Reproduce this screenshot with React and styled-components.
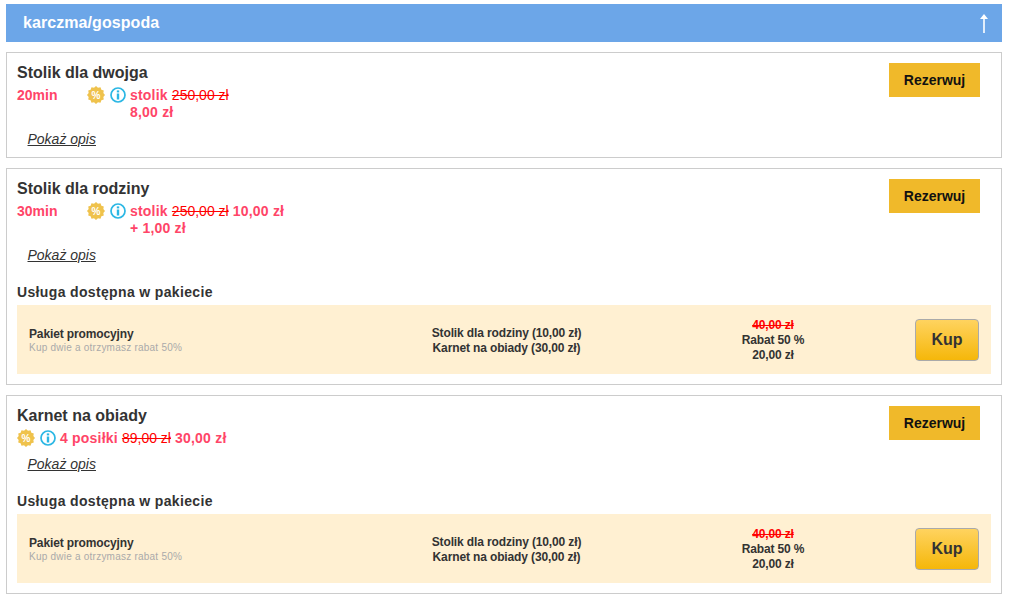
import React from "react";
import styled, { createGlobalStyle } from "styled-components";

const GlobalStyle = createGlobalStyle`
  html, body {
    margin: 0;
    padding: 0;
    background: #fff;
    font-family: "Liberation Sans", Arial, sans-serif;
    color: #333;
  }
`;

const Page = styled.div`
  width: 996px;
  padding: 4px 0 0 6px;
`;

const Header = styled.div`
  height: 38px;
  background: #6ca6e8;
  display: flex;
  align-items: center;
  justify-content: space-between;
  padding: 0 13px 0 17px;
  margin-bottom: 10px;
  color: #fff;
  font-size: 16px;
  font-weight: bold;
  letter-spacing: 0.07px;
`;

const Card = styled.div`
  border: 1px solid #ccc;
  margin-bottom: 10px;
  padding: 10px 10px 0;
`;

const Top = styled.div`
  display: flex;
  justify-content: space-between;
  align-items: flex-start;
`;

const Title = styled.div`
  font-size: 16px;
  font-weight: bold;
  line-height: 20px;
  color: #333;
`;

const PriceRow = styled.div`
  display: flex;
  align-items: flex-start;
  margin-top: 4px;
  font-size: 14px;
  font-weight: bold;
  line-height: 17px;
  letter-spacing: 0.2px;
  color: #ff4568;
`;

const Time = styled.div`
  width: 70px;
  letter-spacing: 0;
`;

const Icons = styled.div`
  display: flex;
  align-items: center;
  gap: 5px;
  height: 17px;
  margin: -1px 4px 0 0;
`;

const OldPrice = styled.span`
  color: #ff0000;
  font-weight: normal;
  letter-spacing: 0;
  text-decoration: line-through;
`;

const Reserve = styled.button`
  width: 91px;
  height: 34px;
  margin-right: 11px;
  border: none;
  padding: 0;
  background: #f0b92a;
  color: #111;
  font: bold 14px "Liberation Sans", Arial, sans-serif;
  cursor: pointer;
`;

const Describe = styled.a`
  display: inline-block;
  margin: ${(p) => (p.$tight ? 9 : 10)}px 0 9px 10.5px;
  font-size: 14px;
  line-height: 17px;
  font-style: italic;
  text-decoration: underline;
  color: #333;
`;

const PackageHeading = styled.div`
  margin-top: 11px;
  font-size: 14px;
  font-weight: bold;
  line-height: 17px;
  letter-spacing: 0.35px;
  color: #333;
`;

const Banner = styled.div`
  display: grid;
  grid-template-columns: 300px 355px 178px 1fr;
  align-items: center;
  box-sizing: border-box;
  height: 69px;
  margin: 4px 0 10px;
  padding: 2px 12px 0;
  background: #fff0d2;
  font-size: 12px;
  font-weight: bold;
  letter-spacing: -0.13px;
  color: #333;
`;

const PackageName = styled.div`
  line-height: 14px;
`;

const PackageNote = styled.div`
  font-size: 10px;
  line-height: 13px;
  font-weight: normal;
  letter-spacing: 0.23px;
  color: #aaa;
`;

const Centered = styled.div`
  text-align: center;
  line-height: 15px;
`;

const Struck = styled.div`
  color: #ff0000;
  text-decoration: line-through;
`;

const Buy = styled.button`
  justify-self: end;
  width: 64px;
  height: 42px;
  margin-top: -2px;
  padding: 0;
  border: 1px solid #aaa;
  border-radius: 4px;
  background: linear-gradient(#ffd35f, #f5b70a);
  color: #333;
  font: bold 16px "Liberation Sans", Arial, sans-serif;
  cursor: pointer;
`;

const UpArrow = () => (
  <svg width="10" height="22" viewBox="0 0 10 22">
    <path d="M5 2 L9 7 H5.8 V21 H4.2 V7 H1 Z" fill="#fff" />
  </svg>
);

const burst = Array.from({ length: 24 }, (_, i) => {
  const r = i % 2 ? 7.6 : 9;
  const a = (i * Math.PI) / 12;
  return `${(9 + r * Math.cos(a)).toFixed(2)},${(9 + r * Math.sin(a)).toFixed(2)}`;
}).join(" ");

const Badge = () => (
  <svg width="18" height="18" viewBox="0 0 18 18">
    <polygon points={burst} fill="#efc24c" />
    <text x="9" y="12.5" textAnchor="middle" fontSize="10" fill="#fff" fontFamily="Liberation Sans">
      %
    </text>
  </svg>
);

const Info = () => (
  <svg width="16" height="16" viewBox="0 0 16 16">
    <circle cx="8" cy="8" r="7" fill="#fff" stroke="#2bb7e4" strokeWidth="1.7" />
    <rect x="6.8" y="6.5" width="2.4" height="6" fill="#2bb7e4" />
    <rect x="6.8" y="3.4" width="2.4" height="2" fill="#2bb7e4" />
  </svg>
);

const Package = () => (
  <>
    <PackageHeading>Usługa dostępna w pakiecie</PackageHeading>
    <Banner>
      <div>
        <PackageName>Pakiet promocyjny</PackageName>
        <PackageNote>Kup dwie a otrzymasz rabat 50%</PackageNote>
      </div>
      <Centered>
        <div>Stolik dla rodziny (10,00 zł)</div>
        <div>Karnet na obiady (30,00 zł)</div>
      </Centered>
      <Centered>
        <Struck>40,00 zł</Struck>
        <div>Rabat 50 %</div>
        <div>20,00 zł</div>
      </Centered>
      <Buy>Kup</Buy>
    </Banner>
  </>
);

export default function App() {
  return (
    <Page>
      <GlobalStyle />
      <Header>
        <span>karczma/gospoda</span>
        <UpArrow />
      </Header>

      <Card>
        <Top>
          <div>
            <Title>Stolik dla dwojga</Title>
            <PriceRow>
              <Time>20min</Time>
              <Icons>
                <Badge />
                <Info />
              </Icons>
              <div>
                stolik <OldPrice>250,00 zł</OldPrice>
                <br />
                8,00 zł
              </div>
            </PriceRow>
          </div>
          <Reserve>Rezerwuj</Reserve>
        </Top>
        <Describe>Pokaż opis</Describe>
      </Card>

      <Card>
        <Top>
          <div>
            <Title>Stolik dla rodziny</Title>
            <PriceRow>
              <Time>30min</Time>
              <Icons>
                <Badge />
                <Info />
              </Icons>
              <div>
                stolik <OldPrice>250,00 zł</OldPrice> 10,00 zł
                <br />+ 1,00 zł
              </div>
            </PriceRow>
          </div>
          <Reserve>Rezerwuj</Reserve>
        </Top>
        <Describe>Pokaż opis</Describe>
        <Package />
      </Card>

      <Card>
        <Top>
          <div>
            <Title>Karnet na obiady</Title>
            <PriceRow>
              <Icons>
                <Badge />
                <Info />
              </Icons>
              <div>
                4 posiłki <OldPrice>89,00 zł</OldPrice> 30,00 zł
              </div>
            </PriceRow>
          </div>
          <Reserve>Rezerwuj</Reserve>
        </Top>
        <Describe $tight>Pokaż opis</Describe>
        <Package />
      </Card>
    </Page>
  );
}
